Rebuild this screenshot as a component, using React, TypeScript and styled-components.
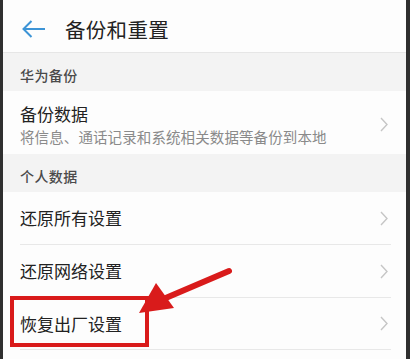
import React from "react";
import styled, { createGlobalStyle } from "styled-components";

const Global = createGlobalStyle`
  html, body { margin: 0; padding: 0; background: #ffffff; overflow: hidden; }
  * { box-sizing: border-box; }
`;

const Frame = styled.div`
  position: relative;
  width: 410px;
  height: 359px;
  border-left: 3px solid #2f2f2f;
  border-right: 4px solid #2f2f2f;
  background: #fdfdfd;
  font-family: "Noto Sans CJK SC", "Noto Sans", sans-serif;
  overflow: hidden;
`;

const Header = styled.div`
  height: 53px;
  display: flex;
  align-items: center;
  padding-left: 19px;
  padding-top: 5px;
  gap: 19px;
  border-bottom: 1px solid #e6e6e6;
  background: #fdfdfd;
`;

const Title = styled.div`
  font-size: 20.5px;
  color: #222;
  letter-spacing: 0.3px;
`;

const Section = styled.div`
  height: 38px;
  background: #f3f3f3;
  display: flex;
  align-items: center;
  padding: 6px 0 0 17px;
  font-size: 14px;
  color: #4a4a4a;
  font-weight: 500;
  letter-spacing: 0.4px;
`;

const Row = styled.div<{ $h: number; $divider?: boolean; $pt?: number }>`
  height: ${(p) => p.$h}px;
  margin-left: 17px;
  margin-right: 15px;
  padding-top: ${(p) => p.$pt ?? 0}px;
  display: flex;
  align-items: center;
  justify-content: space-between;
  border-bottom: ${(p) => (p.$divider ? "1px solid #e8e8e8" : "none")};
`;

const TextCol = styled.div`
  display: flex;
  flex-direction: column;
  gap: 2px;
`;

const RowTitle = styled.div`
  font-size: 17px;
  color: #222;
  line-height: 22px;
`;

const RowSub = styled.div`
  font-size: 14.5px;
  color: #8a8a8a;
  line-height: 20px;
  letter-spacing: 0.1px;
`;

const Chevron = styled.svg`
  width: 8px;
  height: 15px;
  margin-right: 3px;
  flex-shrink: 0;
`;

const Highlight = styled.div`
  position: absolute;
  left: 7px;
  top: 296px;
  width: 139px;
  height: 51px;
  border: 4px solid #d91b1b;
`;

const Arrow = styled.svg`
  position: absolute;
  left: 0;
  top: 0;
  width: 403px;
  height: 359px;
  pointer-events: none;
`;

const ChevronIcon = () => (
  <Chevron viewBox="0 0 8 15">
    <path d="M1 1 L7 7.5 L1 14" fill="none" stroke="#c6c6c6" strokeWidth="1.4" />
  </Chevron>
);

export default function App() {
  return (
    <>
      <Global />
      <Frame>
        <Header>
          <svg width="24" height="18" viewBox="0 0 24 18">
            <path d="M1.5 9 H23 M9.5 1 L1.5 9 L9.5 17" fill="none" stroke="#3d94d6" strokeWidth="2" />
          </svg>
          <Title>备份和重置</Title>
        </Header>
        <Section>华为备份</Section>
        <Row $h={63} $pt={4}>
          <TextCol>
            <RowTitle>备份数据</RowTitle>
            <RowSub>将信息、通话记录和系统相关数据等备份到本地</RowSub>
          </TextCol>
          <ChevronIcon />
        </Row>
        <Section>个人数据</Section>
        <Row $h={53} $divider>
          <RowTitle>还原所有设置</RowTitle>
          <ChevronIcon />
        </Row>
        <Row $h={53} $divider>
          <RowTitle>还原网络设置</RowTitle>
          <ChevronIcon />
        </Row>
        <Row $h={52} $divider>
          <RowTitle>恢复出厂设置</RowTitle>
          <ChevronIcon />
        </Row>
        <Highlight />
        <Arrow viewBox="0 0 403 359">
          <path d="M226 271 L158 300" stroke="#d91b1b" strokeWidth="6" strokeLinecap="round" fill="none" />
          <polygon points="136,313 153,283 171,308" fill="#d91b1b" />
        </Arrow>
      </Frame>
    </>
  );
}
